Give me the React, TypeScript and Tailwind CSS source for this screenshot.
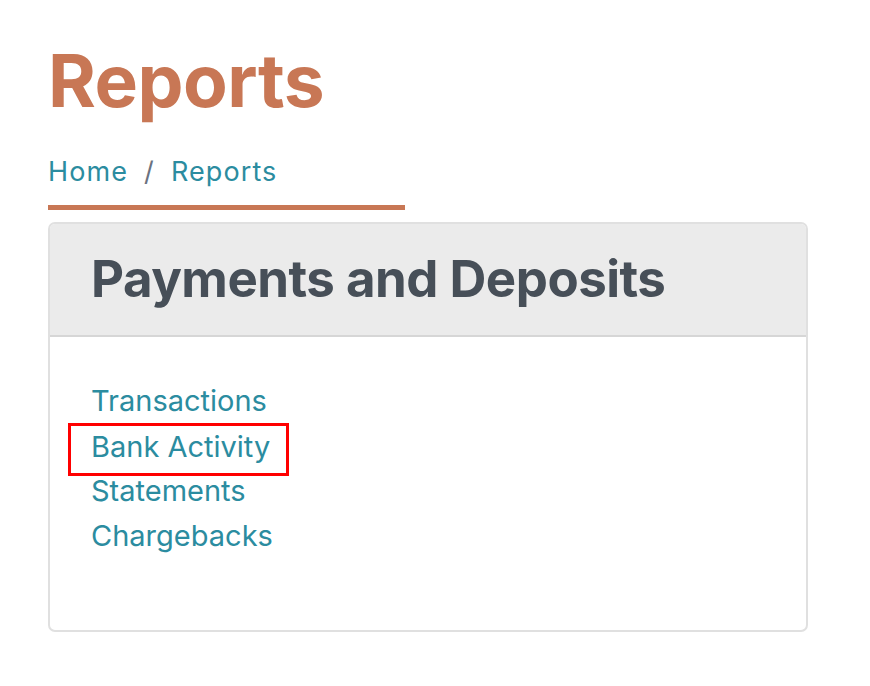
import React from "react";

const links = ["Transactions", "Bank Activity", "Statements", "Chargebacks"];

export default function App() {
    return (
        <div className="min-h-screen bg-white font-['Inter',sans-serif] pl-12 pt-[36px]">
            <h1 className="text-[73px] leading-[90px] font-bold text-[#c87755] tracking-[-0.5px]">Reports</h1>

            <div className="w-[357px] mt-[30px] border-b-[5px] border-[#c87755] pb-[17px]">
                <nav className="flex items-center text-[27px] leading-[32px] tracking-[1.1px] text-[#2b8ca0]">
                    <a href="#">Home</a>
                    <span className="mx-[16px] text-[#6b7280]">/</span>
                    <a href="#">Reports</a>
                </nav>
            </div>

            <div className="w-[760px] mt-[12px] border-2 border-[#e0e0e0] rounded-[7px] overflow-hidden">
                <div className="bg-[#ebebeb] border-b-2 border-[#d6d6d6] h-[113px] flex items-center pl-[41px]">
                    <h2 className="text-[51px] font-bold text-[#474f58] tracking-[-0.5px]">Payments and Deposits</h2>
                </div>
                <div className="pt-[41px] pb-[72px] pl-[41px]">
                    <ul className="flex flex-col">
                        {links.map((l) => (
                            <li key={l} className="leading-[45px] text-[29px] h-[45px] flex items-center">
                                {l === "Bank Activity" ? (
                                    <span className="self-start inline-flex items-center h-[53px] pb-[7px] -mb-[8px] -ml-[23px] pl-[20px] pr-[16px] border-[3px] border-[#ff0000]">
                                        <a href="#" className="text-[#2b8ca0]">{l}</a>
                                    </span>
                                ) : (
                                    <a href="#" className="text-[#2b8ca0]">{l}</a>
                                )}
                            </li>
                        ))}
                    </ul>
                </div>
            </div>
        </div>
    );
}
